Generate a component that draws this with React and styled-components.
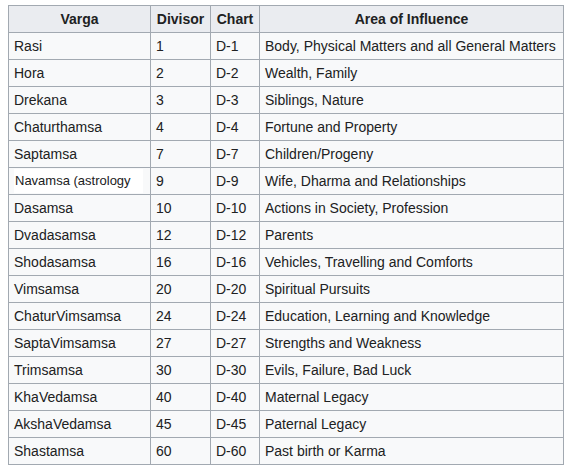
import React from "react";
import styled, { createGlobalStyle } from "styled-components";

const GlobalStyle = createGlobalStyle`
    body {
        margin: 0;
        padding: 5px 8px;
        background: #ffffff;
        font-family: "Liberation Sans", Arial, sans-serif;
    }
`;

const Table = styled.table`
    border-collapse: collapse;
    table-layout: fixed;
    width: 555px;
    background: #f8f9fa;
    color: #202122;
    font-size: 14px;
    border: 1px solid #a2a9b1;
`;

const Head = styled.th`
    background: #eaecf0;
    border: 1px solid #a2a9b1;
    font-weight: bold;
    text-align: center;
    line-height: 26px;
    padding: 0 5px;
    white-space: nowrap;
`;

const Cell = styled.td`
    border: 1px solid #a2a9b1;
    line-height: 26px;
    padding: 0 5px;
    white-space: nowrap;
    overflow: hidden;
`;

const Pasted = styled.span`
    display: block;
    background: #ffffff;
    font-size: 13px;
    line-height: 24px;
    padding-left: 1px;
    margin-right: 2px;
`;

const rows = [
    ["Rasi", "1", "D-1", "Body, Physical Matters and all General Matters"],
    ["Hora", "2", "D-2", "Wealth, Family"],
    ["Drekana", "3", "D-3", "Siblings, Nature"],
    ["Chaturthamsa", "4", "D-4", "Fortune and Property"],
    ["Saptamsa", "7", "D-7", "Children/Progeny"],
    ["Navamsa (astrology", "9", "D-9", "Wife, Dharma and Relationships", true],
    ["Dasamsa", "10", "D-10", "Actions in Society, Profession"],
    ["Dvadasamsa", "12", "D-12", "Parents"],
    ["Shodasamsa", "16", "D-16", "Vehicles, Travelling and Comforts"],
    ["Vimsamsa", "20", "D-20", "Spiritual Pursuits"],
    ["ChaturVimsamsa", "24", "D-24", "Education, Learning and Knowledge"],
    ["SaptaVimsamsa", "27", "D-27", "Strengths and Weakness"],
    ["Trimsamsa", "30", "D-30", "Evils, Failure, Bad Luck"],
    ["KhaVedamsa", "40", "D-40", "Maternal Legacy"],
    ["AkshaVedamsa", "45", "D-45", "Paternal Legacy"],
    ["Shastamsa", "60", "D-60", "Past birth or Karma"],
];

export default function App() {
    return (
        <>
            <GlobalStyle />
            <Table>
                <colgroup>
                    <col style={{ width: 142 }} />
                    <col style={{ width: 60 }} />
                    <col style={{ width: 49 }} />
                    <col style={{ width: 304 }} />
                </colgroup>
                <thead>
                    <tr>
                        <Head>Varga</Head>
                        <Head>Divisor</Head>
                        <Head>Chart</Head>
                        <Head>Area of Influence</Head>
                    </tr>
                </thead>
                <tbody>
                    {rows.map(([varga, divisor, chart, area, pasted]) => (
                        <tr key={varga}>
                            <Cell>{pasted ? <Pasted>{varga}</Pasted> : varga}</Cell>
                            <Cell>{divisor}</Cell>
                            <Cell>{chart}</Cell>
                            <Cell>{area}</Cell>
                        </tr>
                    ))}
                </tbody>
            </Table>
        </>
    );
}
